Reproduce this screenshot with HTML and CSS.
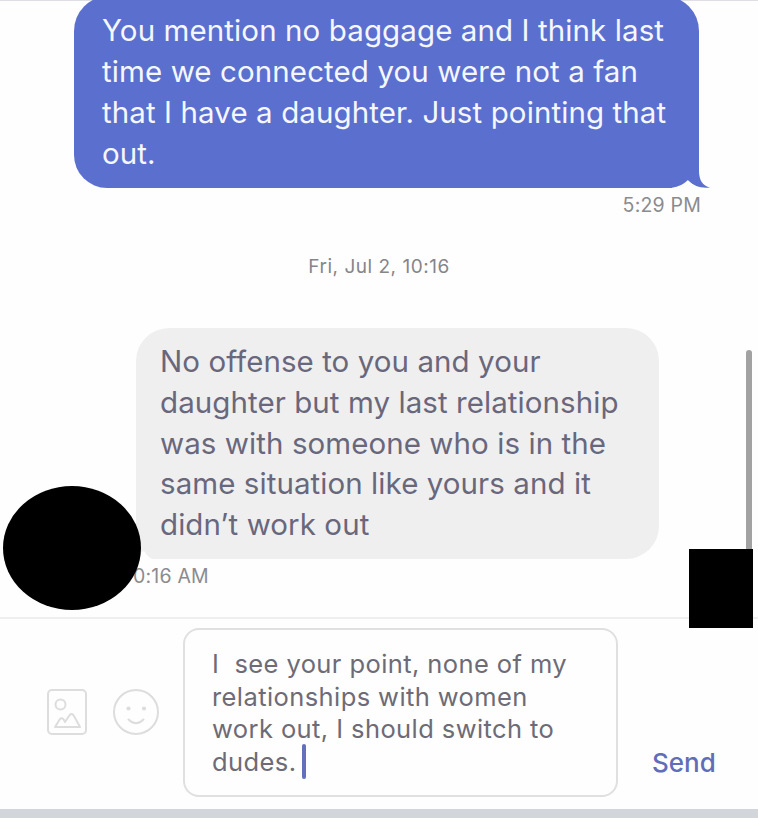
FILE: index.html
```html
<!DOCTYPE html>
<html lang="en">
<head>
<meta charset="utf-8">
<title>Messages</title>
<link rel="stylesheet" href="styles.css">
</head>
<body>
<div class="app">
  <main class="thread">
    <div class="bubble sent">
      <p>You mention no baggage and I think last<br>time we connected you were not a fan<br>that I have a daughter. Just pointing that<br>out.</p>
      <svg class="tail" width="38" height="20" viewBox="0 0 38 20"><path class="notch" d="M-4 20Q8 20 16 12Q24 20 38 20V21H-4Z"/><path class="tip" d="M16 12V0H27V3Q27 17 38 19.500Q24 21 16 12Z"/></svg>
    </div>
    <time class="time sent-time">5:29 PM</time>
    <div class="date">Fri, Jul 2, 10:16</div>
    <div class="bubble received">
      <p>No offense to you and your<br>daughter but my last relationship<br>was with someone who is in the<br>same situation like yours and it<br>didn’t work out</p>
      <svg class="curl" width="16" height="16" viewBox="0 0 16 16"><path d="M0 0V9Q3 11 8 8Q11 13 16 16H0Z"/></svg>
    </div>
    <time class="time received-time">0:16 AM</time>
    <div class="avatar"></div>
    <div class="scrollbar"></div>
    <div class="cover"></div>
  </main>
  <footer class="composer">
    <div class="tools">
      <svg width="42" height="48" viewBox="0 0 42 48"><rect x="2" y="2" width="38" height="44" rx="4"/><circle cx="14.500" cy="16.500" r="5"/><path d="M9 39L14 31Q16 29 18 32L19 34L23 28Q25.500 24 28 28L34 39Z"/></svg>
      <svg width="48" height="48" viewBox="0 0 48 48"><circle cx="24" cy="24" r="22"/><circle class="dot" cx="16.500" cy="20.500" r="2.100"/><circle class="dot" cx="32" cy="20.500" r="2.100"/><path d="M16.500 31.500Q24 39 31.500 31.500"/></svg>
    </div>
    <div class="input"><p>I&nbsp; see your point, none of my<br>relationships with women<br>work out, I should switch to<br>dudes.<span class="caret"></span></p></div>
    <div class="send">Send</div>
  </footer>
  <div class="keyboard"></div>
</div>
</body>
</html>
```
FILE: styles.css
```css
* { box-sizing: border-box; }
body { margin: 0; background: #fefefe; font-family: Inter, "Liberation Sans", sans-serif; }
p { margin: 0; white-space: nowrap; }
.app { height: 818px; display: flex; flex-direction: column; overflow: hidden; }
.thread { position: relative; height: 617px; display: flex; flex-direction: column; border-top: 1px solid #dedee4; }
.bubble { position: relative; font-size: 29.500px; line-height: 40.800px; }
.sent { width: 625px; height: 192px; margin: -5px 0 0 74px; padding: 14.300px 28px; background: #5b6fcf; color: #f5f7ff; border-radius: 35px 35px 0 33px; letter-spacing: 0.1px; }
.tail { position: absolute; left: 598px; bottom: 0; }
.notch { fill: #fefefe; }
.tip { fill: #5b6fcf; }
.time { font-size: 19.500px; line-height: 24px; letter-spacing: 0.200px; color: #8b8b8f; white-space: nowrap; }
.sent-time { margin: 5px 57px 0 0; align-self: flex-end; }
.date { width: 758px; margin-top: 38px; text-align: center; font-size: 19px; line-height: 24px; letter-spacing: 0.520px; color: #85858a; }
.received { width: 523px; height: 231px; margin: 49px 0 0 136px; padding: 13px 24px; background: #efeff0; color: #69677c; border-radius: 33px 33px 33px 0; letter-spacing: 0.070px; }
.curl { position: absolute; left: 0; bottom: 0; fill: #fefefe; }
.received-time { margin: 5px 0 0 133px; }
.avatar { position: absolute; left: 3px; top: 485px; width: 138px; height: 124px; border-radius: 50%; background: #000; }
.scrollbar { position: absolute; left: 746px; top: 349px; width: 6px; height: 210px; border-radius: 3px; background: #a2a2a2; }
.cover { position: absolute; z-index: 2; left: 689px; top: 548px; width: 64px; height: 79px; background: #000; }
.composer { height: 192px; border-top: 2px solid #efeff0; display: flex; align-items: flex-start; }
.tools { display: flex; gap: 24px; width: 137px; margin: 69px 0 0 46px; }
.tools svg { fill: none; stroke: #dddddd; stroke-width: 2; stroke-linejoin: round; stroke-linecap: round; }
.tools .dot { fill: #dddddd; stroke: none; }
.input { width: 435px; height: 169px; margin-top: 9px; border: 2px solid #e0e0e1; border-radius: 16px; padding: 18px 27px; font-size: 25.500px; line-height: 32.700px; letter-spacing: 0.410px; color: #6d6b76; }
.caret { position: relative; top: -8px; display: inline-block; width: 4px; height: 35px; margin: -8px 0 -8px 6px; vertical-align: -8px; border-radius: 2px; background: #6470bb; }
.send { margin: 127px 0 0 34px; font-size: 26px; line-height: 34px; font-weight: 500; color: #616db9; }
.keyboard { height: 9px; background: #d2d5d9; }
```
